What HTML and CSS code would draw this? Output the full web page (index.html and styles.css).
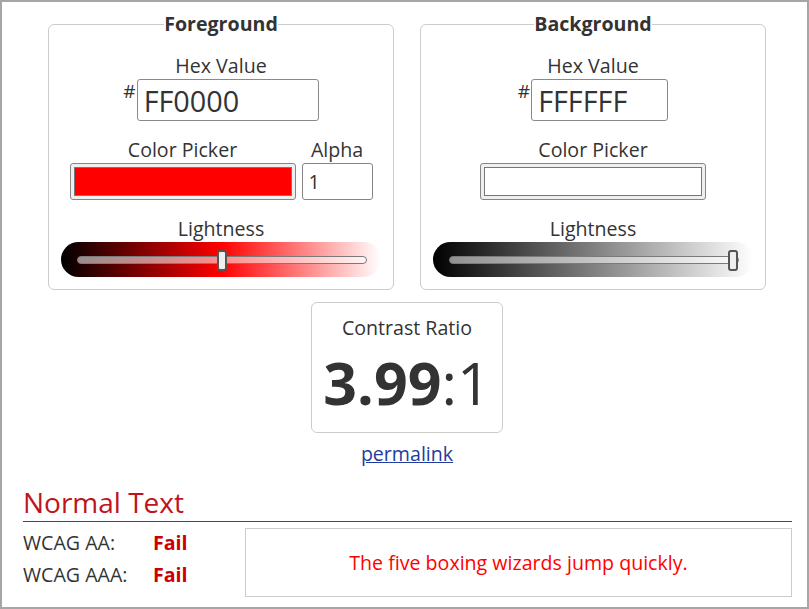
FILE: index.html
```html
<!DOCTYPE html>
<html lang="en">
<head>
<meta charset="utf-8">
<title>Contrast Checker</title>
<link rel="stylesheet" href="styles.css">
</head>
<body>
<main class="page">
  <div class="pickers">
    <fieldset class="panel">
      <legend class="panel-title">Foreground</legend>
      <div class="field">
        <label class="label" for="fhex">Hex Value</label>
        <div class="hex-row">
          <span class="hash">#</span>
          <input id="fhex" class="hex hex-wide" type="text" value="FF0000">
        </div>
      </div>
      <div class="pick-row">
        <div class="field">
          <span class="label">Color Picker</span>
          <div class="swatch"><div class="swatch-fill swatch-red"></div></div>
        </div>
        <div class="field">
          <label class="label" for="falpha">Alpha</label>
          <input id="falpha" class="alpha" type="text" value="1">
        </div>
      </div>
      <div class="field field-light">
        <label class="label" for="flight">Lightness</label>
        <div class="light light-red">
          <input id="flight" class="range" type="range" min="0" max="100" value="50">
        </div>
      </div>
    </fieldset>

    <fieldset class="panel">
      <legend class="panel-title">Background</legend>
      <div class="field">
        <label class="label" for="bhex">Hex Value</label>
        <div class="hex-row">
          <span class="hash">#</span>
          <input id="bhex" class="hex hex-narrow" type="text" value="FFFFFF">
        </div>
      </div>
      <div class="pick-row">
        <div class="field">
          <span class="label">Color Picker</span>
          <div class="swatch"><div class="swatch-fill swatch-white"></div></div>
        </div>
      </div>
      <div class="field field-light">
        <label class="label" for="blight">Lightness</label>
        <div class="light light-grey">
          <input id="blight" class="range" type="range" min="0" max="100" value="100">
        </div>
      </div>
    </fieldset>
  </div>

  <div class="ratio-box">
    <div class="ratio-label">Contrast Ratio</div>
    <div class="ratio-value"><strong>3.99</strong>:1</div>
  </div>
  <a class="permalink" href="#">permalink</a>

  <section class="results">
    <h2 class="results-title">Normal Text</h2>
    <div class="results-row">
      <div class="grades">
        <div class="grade"><span class="grade-name">WCAG AA:</span><span class="grade-fail">Fail</span></div>
        <div class="grade"><span class="grade-name">WCAG AAA:</span><span class="grade-fail">Fail</span></div>
      </div>
      <div class="sample">The five boxing wizards jump quickly.</div>
    </div>
  </section>
</main>
</body>
</html>
```

FILE: styles.css
```css
html, body {
  margin: 0;
  padding: 0;
}
body {
  height: 100vh;
  box-sizing: border-box;
  border: 2px solid #a6a6a6;
  overflow: hidden;
  background: #fff;
  color: #333;
  font-family: "Open Sans", "Liberation Sans", sans-serif;
  font-size: 19.6px;
  line-height: 24px;
}
.page {
  padding: 10px 15px 0 20px;
  display: flex;
  flex-direction: column;
  align-items: center;
}
.pickers {
  display: flex;
  gap: 26px;
  justify-content: center;
}
.panel {
  width: 346px;
  box-sizing: border-box;
  margin: 0;
  padding: 18px 0 12px;
  border: 1px solid #cccccc;
  border-radius: 6px;
  min-inline-size: 0;
  display: flex;
  flex-direction: column;
  align-items: center;
}
.panel-title {
  margin: 0 auto;
  padding: 0;
  font-weight: 700;
  line-height: 24px;
}
.field {
  display: flex;
  flex-direction: column;
  align-items: center;
}
.label {
  display: block;
  line-height: 24px;
}
.hex-row {
  display: flex;
  align-items: flex-start;
  margin-top: 1px;
}
.hash {
  font-size: 19px;
  line-height: 20px;
  margin: 2px 1px 0 0;
}
.hex {
  box-sizing: border-box;
  height: 42px;
  border: 1px solid #8a8a8a;
  border-radius: 3px;
  padding: 0 6px;
  font-family: inherit;
  font-size: 28.8px;
  color: #333;
  background: #fff;
}
.hex-wide { width: 182px; }
.hex-narrow { width: 137px; }
.pick-row {
  display: flex;
  gap: 6px;
  margin-top: 17px;
}
.pick-row .label {
  margin-bottom: 1px;
}
.swatch {
  box-sizing: border-box;
  width: 226px;
  height: 37px;
  padding: 3px;
  background: #efefef;
  border: 1px solid #858585;
  border-radius: 3px;
}
.swatch-fill {
  box-sizing: border-box;
  height: 100%;
  border: 1px solid #777;
}
.swatch-red { background: #ff0000; }
.swatch-white { background: #ffffff; }
.alpha {
  box-sizing: border-box;
  width: 71px;
  height: 37px;
  border: 1px solid #858585;
  border-radius: 3px;
  padding: 0 6px;
  font-family: inherit;
  font-size: 19.6px;
  color: #333;
  background: #fff;
}
.field-light {
  margin-top: 17px;
}
.field-light .label {
  margin-bottom: 1px;
}
.light {
  box-sizing: border-box;
  width: 320px;
  height: 35px;
  padding-left: 16px;
  border-radius: 17.5px;
  display: flex;
  align-items: center;
}
.light-red {
  background: linear-gradient(to right, #000000, #ff0000 50%, #ffffff);
}
.light-grey {
  background: linear-gradient(to right, #000000, #ffffff);
}
.range {
  -webkit-appearance: none;
  appearance: none;
  width: 290px;
  height: 21px;
  margin: 0;
  padding: 0;
  background: transparent;
  display: block;
}
.range::-webkit-slider-runnable-track {
  height: 8px;
  border: 1px solid #7a7a7a;
  border-radius: 5px;
  background: rgba(255, 255, 255, 0.55);
}
.range::-webkit-slider-thumb {
  -webkit-appearance: none;
  appearance: none;
  box-sizing: border-box;
  width: 10px;
  height: 21px;
  margin-top: -7px;
  border: 2px solid #555;
  border-radius: 3px;
  background: #eeeeee;
}
.ratio-box {
  box-sizing: border-box;
  width: 192px;
  height: 131px;
  margin-top: 12px;
  padding-top: 13px;
  border: 1px solid #cccccc;
  border-radius: 6px;
  text-align: center;
}
.ratio-label {
  line-height: 24px;
}
.ratio-value {
  font-size: 59px;
  line-height: 60px;
  margin-top: 12px;
}
.ratio-value strong {
  font-weight: 700;
}
.permalink {
  display: block;
  margin-top: 9px;
  color: #1f3c9e;
  line-height: 24px;
}
.results {
  align-self: stretch;
  margin: 18px 0 0 1px;
}
.results-title {
  margin: 0;
  font-size: 28px;
  line-height: 37px;
  font-weight: 400;
  color: #c0131c;
  border-bottom: 1px solid #b31b1f;
}
.results-row {
  display: flex;
  margin-top: 6px;
}
.grades {
  width: 222px;
  padding-top: 3px;
}
.grade {
  display: flex;
  line-height: 24px;
  margin-bottom: 8px;
}
.grade-name {
  width: 130px;
}
.grade-fail {
  color: #cc0000;
  font-weight: 700;
}
.sample {
  flex: 1;
  box-sizing: border-box;
  height: 69px;
  border: 1px solid #cccccc;
  color: #ff0000;
  display: flex;
  align-items: center;
  justify-content: center;
}
```
